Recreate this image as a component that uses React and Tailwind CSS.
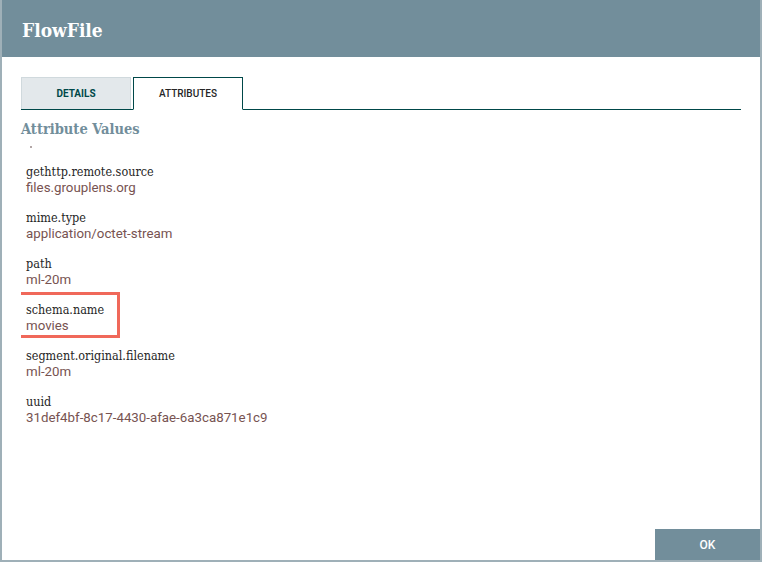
const ATTRIBUTES = [
  { name: "gethttp.remote.source", value: "files.grouplens.org" },
  { name: "mime.type", value: "application/octet-stream" },
  { name: "path", value: "ml-20m" },
  { name: "schema.name", value: "movies", highlight: true },
  { name: "segment.original.filename", value: "ml-20m" },
  { name: "uuid", value: "31def4bf-8c17-4430-afae-6a3ca871e1c9" },
];

const slabNarrow = { fontFamily: '"DejaVu Serif Condensed", "DejaVu Serif", serif', fontStretch: "condensed" };

export default function App() {
  return (
    <div className="w-[762px] h-[562px] bg-white overflow-hidden">
      <div className="w-full h-full flex flex-col border-l-2 border-r-2 border-b-2 border-[#9fb0b8] bg-white">
        {/* Header */}
        <div className="h-[57px] shrink-0 bg-[#728e9b] flex items-center px-[20px] pt-[3px]">
          <h1 className="text-white text-[19px] font-bold" style={slabNarrow}>
            FlowFile
          </h1>
        </div>

        {/* Body */}
        <div className="flex-1 flex flex-col px-[19px] pt-[21px] min-h-0" style={{ fontFamily: "Roboto, sans-serif" }}>
          {/* Tabs */}
          <div className="flex items-end border-b border-[#004849] h-[32px] shrink-0">
            <button className="w-[110px] h-[32px] bg-[#e3e8eb] border border-[#d0d9dd] border-b-0 text-[#004849] text-[10px] font-bold">
              DETAILS
            </button>
            <button className="ml-[2px] w-[110px] h-[33px] -mb-px bg-white border border-[#004849] border-b-white text-[#262626] text-[10px] font-medium">
              ATTRIBUTES
            </button>
          </div>

          <h2 className="mt-[10px] text-[#728e9b] text-[14.5px] font-bold leading-[18px]" style={slabNarrow}>
            Attribute Values
          </h2>

          {/* Attribute list */}
          <div className="flex-1 min-h-0 overflow-hidden pl-[5px]">
            <div className="h-[2px] ml-[4px] mt-[8px] w-[2px] bg-[#9a8a8a] rounded-full" />
            <div className="flex flex-col mt-[16px]">
              {ATTRIBUTES.map((attr) => (
                <div key={attr.name} className="relative h-[46px]">
                  {attr.highlight && (
                    <div className="absolute left-[-11px] top-[-10px] w-[105px] h-[46px] border-[3px] border-[#f0685a]" />
                  )}
                  <div className="text-[#262626] text-[12.5px] leading-4" style={slabNarrow}>
                    {attr.name}
                  </div>
                  <div className="text-[#775351] text-[13.3px] leading-4">{attr.value}</div>
                </div>
              ))}
            </div>
          </div>
        </div>

        {/* Footer */}
        <div className="h-[31px] shrink-0 flex justify-end">
          <button
            className="w-[105px] h-full bg-[#728e9b] text-white text-[12px] font-medium"
            style={{ fontFamily: "Roboto, sans-serif" }}
          >
            OK
          </button>
        </div>
      </div>
    </div>
  );
}
